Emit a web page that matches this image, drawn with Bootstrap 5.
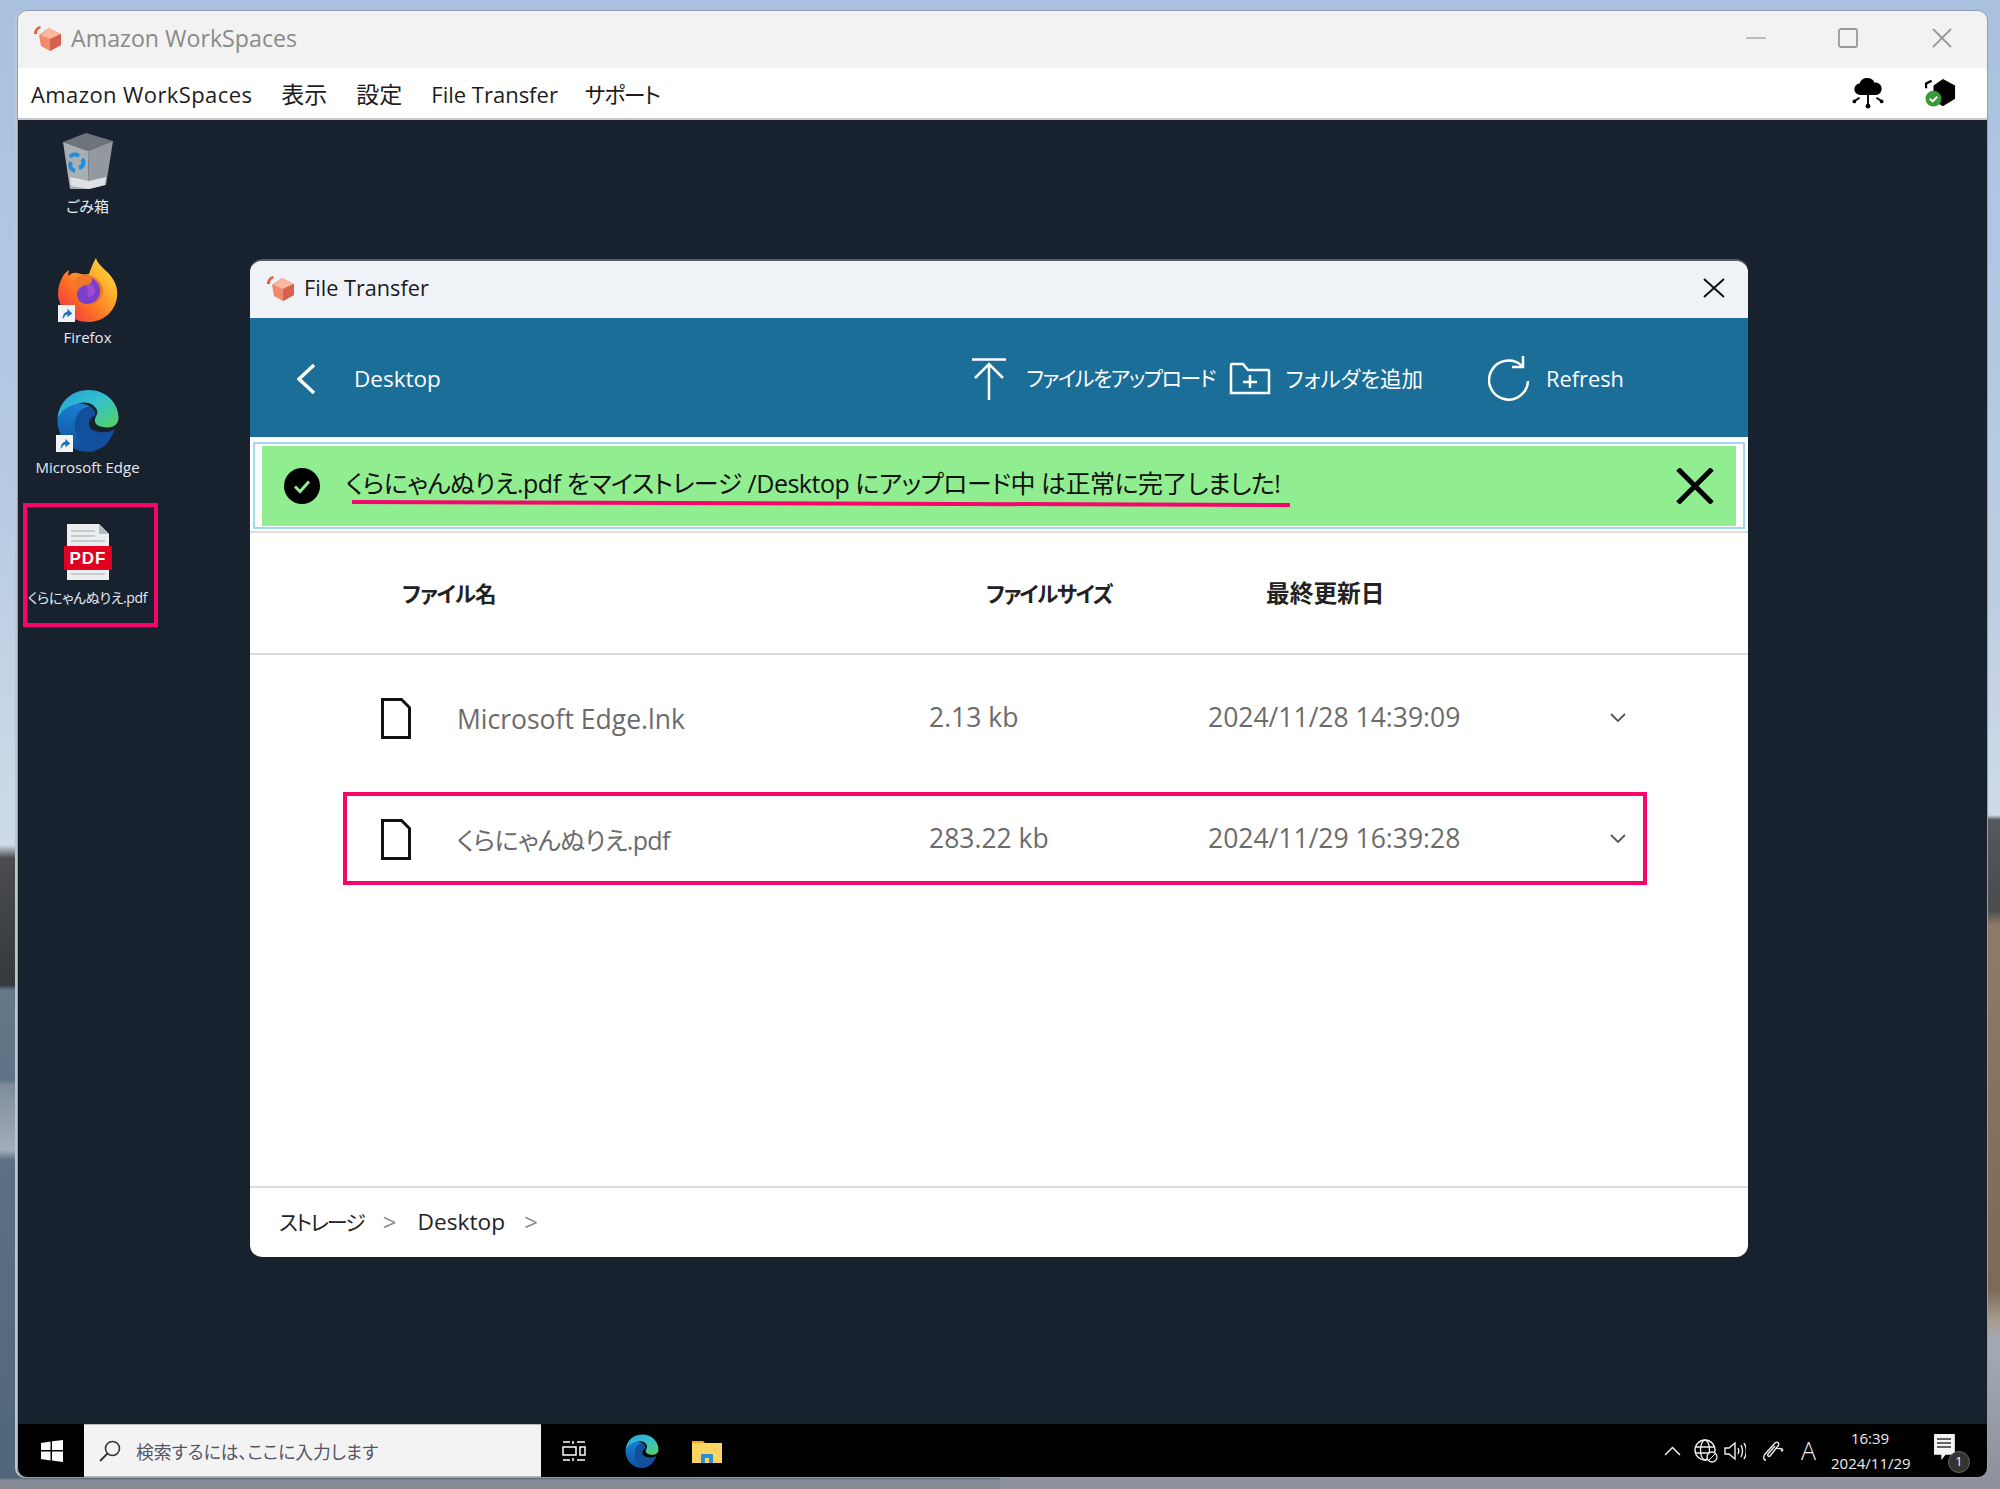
<!DOCTYPE html>
<html lang="ja">
<head>
<meta charset="utf-8">
<title>Amazon WorkSpaces</title>
<link href="https://cdn.jsdelivr.net/npm/bootstrap@5.3.0/dist/css/bootstrap.min.css" rel="stylesheet">
<style>
html,body{height:1489px;overflow:hidden}
body{margin:0;padding:10px 12px 11px 17px;font-family:"Open Sans","Noto Sans CJK JP",sans-serif;font-feature-settings:"palt";color:#1c1c1c;
background:
 linear-gradient(to bottom,#a9c1df 0,#b7cbe3 500px,#cfdbe8 845px,#4a4c50 858px,#35383c 985px,#66798a 990px,#5e7386 1080px,#7f8c9c 1085px,#a3aebb 1150px,#5c7084 1160px,#50667a 1478px,#858a95 1480px,#858a95 1489px) left top/50% 100% no-repeat,
 linear-gradient(to bottom,#a9c1df 0,#bccee3 600px,#cfdbe8 815px,#55585c 820px,#4a4c4e 910px,#8d7a68 925px,#7c6a58 1290px,#a79c90 1320px,#a4aab6 1340px,#8d929c 1478px,#8d929c 1489px) right top/50% 100% no-repeat}
.wsp-win{width:1971px;height:1468px;border:1px solid #8fa0b6;border-radius:10px;overflow:hidden;box-shadow:-2px 0 0 #c0c6ce}
.wsp-title{height:57px;background:#f2f2f2;color:#8a8a8a;font-size:23.2px;padding:0 0 2px 15px}
.ctl-gap1{margin-left:72px}.ctl-gap2{margin-left:74px;margin-right:35px}
.wsp-menu{height:52px;background:#fff;border-bottom:2px solid #c8c8c8;font-size:22px;padding:3px 30px 0 13px}
.wsp-menu .mitem{margin-right:29px}
.wsp-menu .mi-ft{margin-right:27px}
.mi-app{letter-spacing:.4px}.mi-cj{font-size:23px}.mi-sup{font-size:22px;letter-spacing:-1.5px}
.tray-ics{gap:41px;margin-top:-3px}
.wsp-desk{height:1305px;background:#18222f;position:relative}
.desk-col{width:135px;margin-left:5px;padding-top:13px}
.desk-shift{margin-right:6px}
.desk-label{color:#e4e9ef;font-size:15px;line-height:20px;white-space:nowrap}
.mt-bin{margin-top:7px}.mt-ic{margin-top:42px}.mt-lb{margin-top:5px}
.pdf-box{width:135px;height:124px;margin-top:26px;border:4px solid #f7056d;padding:17px 6px 0 0}
.pdf-box .desk-label{margin-top:8px;font-size:14px;letter-spacing:-.35px}
.dlg{position:absolute;left:232px;top:141px;width:1498px;height:996px;background:#fff;border-radius:12px;overflow:hidden;box-shadow:0 -2px 0 #555b63}
.dlg-title{height:57px;background:#eff3f8;font-size:21.7px;padding:0 23px 2px 16px}
.dlg-head{height:119px;background:#1a6e97;color:#fff;font-size:22.5px;padding:3px 124px 0 47px}
.desk-head-name{margin-left:38px}
.t-up{font-size:21px;letter-spacing:-1.55px}.t-fold{font-size:21.5px}.t-ref{font-size:21.8px}
.g1{margin-left:20px}.g2{margin-left:14px}.g3{margin-left:15px}.g4{margin-left:65px}.g5{margin-left:16px}
.alert-wrap{height:96px;position:relative;padding:5px 3px 0;border-bottom:2px solid #dcdcdc;background:#fff}
.ok-alert{height:87px;border:2px solid #a4d6f6;border-radius:0;margin:0;padding:2px 7px 1px 7px;background:#fff}
.ok-in{height:100%;background:#90ee90;color:#111;font-size:25px;letter-spacing:-.5px;padding:0 22px}
.ok-text{margin-left:26px;padding-bottom:4px}
.red-line{position:absolute;left:102px;top:63px}
.tbl-head{height:122px;padding:2px 0 0 152px;border-bottom:2px solid #dcdcdc;font-size:23.7px;font-weight:600;color:#222}
.c-hname{width:584px;font-size:21.5px;letter-spacing:-.9px}.c-hsize{width:280px;font-size:21.5px;letter-spacing:-1.5px}
.frow{height:93px;margin:0 101px 28px 93px;border:4px solid transparent;color:#6b6b6b;font-size:26.5px;padding-left:34px}
.frow-first{margin-top:16px}
.frow-on{border-color:#f7056d}
.f-doc{margin-top:3px}
.f-chev{margin-top:2px}
.c-name{width:472px;margin-left:46px;padding-top:4px}.c-size{width:279px}.c-date{width:402px}
.n-jp{font-size:25px;letter-spacing:-.65px}
.dlg-foot{position:absolute;left:0;right:0;bottom:0;height:71px;border-top:2px solid #dcdcdc;padding-left:29px;font-size:22.7px;color:#222}
.b-jp{font-size:21px;letter-spacing:-1.9px}
.gt{color:#8a8a8a;font-size:24px;margin:0 21px 0 19px}
.wsp-bar{height:53px;background:#000;color:#fff}
.bar-start{width:66px;padding-left:23px}
.bar-search{width:457px;height:53px;background:#f3f3f3;color:#556;font-size:17.8px;padding-left:15px;border-top:1px solid #bbb;border-bottom:1px solid #bbb}
.bar-search svg{margin-right:15px}
.bar-search span{padding-top:3px}
.tv{margin-left:21px}.eg{margin-left:39px}.fd{margin-left:33px}
.tray{margin-left:auto;margin-right:22px;color:#eee}
.tr1{margin-left:13px}.tr2{margin-left:6px}.tr3{margin-left:16px}.tr4{margin-left:17px;font-size:25px;font-weight:300;line-height:1}
.clock{font-size:15px;line-height:25px;text-align:center;width:78px;margin:0 24px 0 15px}
.notif{position:relative;width:32px;height:36px}
.nbadge{position:absolute;right:-5px;bottom:-4px;width:22px;height:22px;border-radius:50%;background:#333;border:1px solid #666;font-size:12px;line-height:20px;text-align:center;color:#fff}
</style>
</head>
<body>
<svg width="0" height="0" class="position-absolute">
 <defs>
  <symbol id="cube" viewBox="0 0 30 26">
   <path d="M16 3l12 6v11l-11 6-9-5-2-11z" fill="#f08a6c"/>
   <path d="M16 3l12 6-11 5-9-4z" fill="#f9b8a0"/>
   <path d="M17 14l11-5v11l-11 6z" fill="#d9604a"/>
   <path d="M1 9C1 5 3 2 7 1l1 2C5 4 4 6 4 9z" fill="#e5603f"/>
  </symbol>
  <symbol id="short" viewBox="0 0 18 18">
   <rect width="18" height="18" fill="#f1f3f5"/>
   <path d="M5 15c0-5 2-7 5-8V4l5 5-5 4v-3c-2 0-3 2-5 5z" fill="#1e6fc0"/>
  </symbol>
  <linearGradient id="eg1" x1="0" y1="0" x2="1" y2="1"><stop offset="0" stop-color="#1f9fe0"/><stop offset=".5" stop-color="#35c1c9"/><stop offset="1" stop-color="#57d35c"/></linearGradient>
  <linearGradient id="eg2" x1="0" y1="0" x2="0" y2="1"><stop offset="0" stop-color="#1a7ed0"/><stop offset="1" stop-color="#0f4f9a"/></linearGradient>
  <symbol id="edge" viewBox="0 0 64 64">
   <path d="M1 30C3 12 16 1 33 1c17 0 30 13 30 28 0 6-4 10-11 10-9 0-13-3-13-7 0-5 4-6 2-11-3-6-11-9-19-6C13 18 5 23 1 30z" fill="url(#eg1)"/>
   <path d="M1 30C6 20 15 15 24 15c7 0 10 3 10 3-9 1-15 8-15 19 0 12 9 23 21 26-3 1-6 1-8 1C14 64 0 49 1 30z" fill="url(#eg2)"/>
   <path d="M19 37c0-11 6-18 15-19 4 2 6 5 5 9-2 1-6 3-6 8 0 6 6 9 14 9 6 0 10-1 12-3-4 13-13 22-24 22C26 60 19 49 19 37z" fill="#124f9c"/>
  </symbol>
 </defs>
</svg>
<div class="wsp-win d-flex flex-column">
 <div class="wsp-title d-flex align-items-center">
  <svg width="30" height="26" class="me-2"><use href="#cube"/></svg>
  <span>Amazon WorkSpaces</span>
  <div class="ms-auto d-flex align-items-center">
   <svg width="20" height="20" viewBox="0 0 20 20"><path d="M0 10h20" stroke="#aaa" stroke-width="1.6"/></svg>
   <svg width="20" height="20" viewBox="0 0 20 20" class="ctl-gap1"><rect x="1" y="1" width="18" height="18" rx="2" fill="none" stroke="#999" stroke-width="1.8"/></svg>
   <svg width="20" height="20" viewBox="0 0 20 20" class="ctl-gap2"><path d="M1 1l18 18M19 1L1 19" stroke="#999" stroke-width="1.8"/></svg>
  </div>
 </div>
 <div class="wsp-menu d-flex align-items-center">
  <span class="mitem mi-app">Amazon WorkSpaces</span><span class="mitem mi-cj">表示</span><span class="mitem mi-cj">設定</span><span class="mitem mi-ft">File Transfer</span><span class="mi-sup">サポート</span>
  <div class="ms-auto d-flex align-items-center tray-ics">
   <svg width="32" height="32" viewBox="0 0 34 34"><path d="M9 19a6 6 0 0 1-1-12c1-4 4-6 8-6 4 0 7 2 8 5a6.500 6.500 0 0 1 2 13z"/><path d="M17 19v12M8 22l-6 4M26 22l6 4" stroke="#000" stroke-width="2"/><circle cx="17" cy="31" r="2.500"/><circle cx="2.500" cy="26" r="2"/><circle cx="31.500" cy="26" r="2"/></svg>
   <svg width="32" height="30" viewBox="0 0 34 32"><path d="M19 1l13 7v14l-13 8-10-6V8z"/><path d="M1 11V6l6-3" stroke="#000" stroke-width="2.500" fill="none"/><circle cx="9" cy="22" r="8.500" fill="#3a9a35"/><path d="M5 22l3 3 5-5" stroke="#fff" stroke-width="2" fill="none"/></svg>
  </div>
 </div>
 <div class="wsp-desk">
  <div class="desk-col d-flex flex-column align-items-center">
   <svg width="52" height="56" viewBox="0 0 52 56" class="desk-shift"><path d="M1 9L24 0l27 8-25 10z" fill="#6f747a"/><path d="M1 9l25 9 1 38H8z" fill="#a9aeb3"/><path d="M26 18l25-10-7 44-17 4z" fill="#93999f"/><path d="M8 44l19 4 17-4-1 8-16 4-18-3z" fill="#dfe2e5"/><path d="M8 24a6 6 0 0 1 9-1M20 26c3 3 1 8-3 9M13 38c-4-1-6-5-4-9" stroke="#1e8fe0" stroke-width="4" fill="none"/></svg>
   <div class="desk-label mt-bin desk-shift">ごみ箱</div>
   <div class="mt-ic position-relative desk-shift">
    <svg width="60" height="64" viewBox="0 0 60 64">
     <defs><linearGradient id="ff" x1="0" y1="1" x2="1" y2="0"><stop offset="0" stop-color="#ec1f5f"/><stop offset=".35" stop-color="#fb6a25"/><stop offset=".7" stop-color="#ffb52e"/><stop offset="1" stop-color="#ffe14a"/></linearGradient></defs>
     <path d="M38 0c2 7 8 10 14 17 6 7 8 15 7 22-2 15-14 25-29 25C13 64 0 51 0 35c0-6 2-11 4-15 1-3 3-5 7-8l-1 6c3-3 7-4 9-3 4 1 7 2 12 1 2-6 4-11 7-16z" fill="url(#ff)"/>
     <path d="M30 17c-8-1-14 4-17 9 2 0 3 0 5 1-1 2-1 4-1 6 0 9 8 15 15 14 8-1 13-7 13-14 0-8-6-14-15-16z" fill="#f0772a"/>
     <path d="M19 36c0-5 5-9 11-9 3-1 4-3 4-7 5 3 8 7 8 13 0 8-6 13-13 13-6 0-10-4-10-10z" fill="#7a3fc9"/>
     <path d="M29 27c5-1 8 2 8 6 0 3-3 6-7 6" fill="#a44ad1"/>
    </svg>
    <svg width="17" height="17" class="position-absolute bottom-0 start-0"><use href="#short"/></svg>
   </div>
   <div class="desk-label mt-lb desk-shift">Firefox</div>
   <div class="mt-ic position-relative desk-shift">
    <svg width="64" height="63"><use href="#edge"/></svg>
    <svg width="17" height="17" class="position-absolute bottom-0 start-0"><use href="#short"/></svg>
   </div>
   <div class="desk-label mt-lb desk-shift">Microsoft Edge</div>
   <div class="pdf-box d-flex flex-column align-items-center">
    <svg width="48" height="56" viewBox="0 0 48 56"><path d="M3 0h32l10 10v46H3z" fill="#eceeef"/><path d="M35 0l10 10H35z" fill="#b9bcc0"/><path d="M7 7h24M7 12h24M7 17h34M7 50h34" stroke="#bcc0c4" stroke-width="1.500"/><rect y="22" width="48" height="24" fill="#e00020"/><text x="24" y="40" text-anchor="middle" font-family="'Liberation Sans',sans-serif" font-weight="700" font-size="17" fill="#fff" letter-spacing="1">PDF</text></svg>
    <div class="desk-label">くらにゃんぬりえ.pdf</div>
   </div>
  </div>

  <div class="dlg">
   <div class="dlg-title d-flex align-items-center">
    <svg width="30" height="26" class="me-2"><use href="#cube"/></svg>
    <span>File Transfer</span>
    <svg width="22" height="20" viewBox="0 0 22 20" class="ms-auto"><path d="M1 1l20 18M21 1L1 19" stroke="#111" stroke-width="2"/></svg>
   </div>
   <div class="dlg-head d-flex align-items-center">
    <svg width="19" height="30" viewBox="0 0 19 30"><path d="M17 1L2 15l15 14" fill="none" stroke="#fff" stroke-width="3.500"/></svg>
    <span class="desk-head-name">Desktop</span>
    <div class="ms-auto d-flex align-items-center">
     <svg width="34" height="42" viewBox="0 0 34 42"><path d="M0 1.500h34M17 6v36M3 20L17 6l14 14" fill="none" stroke="#fff" stroke-width="2.500"/></svg>
     <span class="g1 t-up">ファイルをアップロード</span>
     <svg width="42" height="33" viewBox="0 0 42 33" class="g2"><path d="M2 31V3a1 1 0 0 1 1-1h11l5 6h20a1 1 0 0 1 1 1v22z" fill="none" stroke="#fff" stroke-width="2.500"/><path d="M21 13v13M14 20h14" stroke="#fff" stroke-width="2.500"/></svg>
     <span class="g3 t-fold">フォルダを追加</span>
     <svg width="42" height="46" viewBox="0 0 42 46" class="g4"><path d="M34 10a19.500 19.500 0 1 0 6 15" fill="none" stroke="#fff" stroke-width="2.500"/><path d="M35 0v11H24" fill="none" stroke="#fff" stroke-width="2.500"/></svg>
     <span class="g5 t-ref">Refresh</span>
    </div>
   </div>
   <div class="alert-wrap">
    <div class="alert ok-alert" role="alert">
     <div class="ok-in d-flex align-items-center">
      <svg width="36" height="36" viewBox="0 0 36 36" class="flex-shrink-0"><circle cx="18" cy="18" r="18"/><path d="M11 18.500l5 5 9-10" fill="none" stroke="#90ee90" stroke-width="3"/></svg>
      <span class="ok-text">くらにゃんぬりえ.pdf をマイストレージ /Desktop にアップロード中 は正常に完了しました!</span>
      <svg width="38" height="36" viewBox="0 0 38 36" class="ms-auto"><path d="M2 1l34 34M36 1L2 35" stroke="#000" stroke-width="5"/></svg>
     </div>
    </div>
    <svg class="red-line" width="938" height="7" viewBox="0 0 938 7"><path d="M0 2L938 5" stroke="#f7056d" stroke-width="4"/></svg>
   </div>
   <div class="tbl-head d-flex align-items-center">
    <span class="c-hname">ファイル名</span><span class="c-hsize">ファイルサイズ</span><span>最終更新日</span>
   </div>
   <div class="frow frow-first d-flex align-items-center">
    <svg width="30" height="41" viewBox="0 0 30 41" class="flex-shrink-0 f-doc"><path d="M1.500 1.500h19l8 8v30h-27z" fill="#fff" stroke="#111" stroke-width="3"/></svg>
    <span class="c-name">Microsoft Edge.lnk</span><span class="c-size">2.13 kb</span><span class="c-date">2024/11/28 14:39:09</span>
    <svg width="16" height="10" viewBox="0 0 16 10" class="f-chev"><path d="M1 1l7 7 7-7" fill="none" stroke="#555" stroke-width="1.800"/></svg>
   </div>
   <div class="frow frow-on d-flex align-items-center">
    <svg width="30" height="41" viewBox="0 0 30 41" class="flex-shrink-0 f-doc"><path d="M1.500 1.500h19l8 8v30h-27z" fill="#fff" stroke="#111" stroke-width="3"/></svg>
    <span class="c-name n-jp">くらにゃんぬりえ.pdf</span><span class="c-size">283.22 kb</span><span class="c-date">2024/11/29 16:39:28</span>
    <svg width="16" height="10" viewBox="0 0 16 10" class="f-chev"><path d="M1 1l7 7 7-7" fill="none" stroke="#555" stroke-width="1.800"/></svg>
   </div>
   <div class="dlg-foot d-flex align-items-center">
    <span class="b-jp">ストレージ</span><span class="gt">&gt;</span><span>Desktop</span><span class="gt">&gt;</span>
   </div>
  </div>
 </div>
 <div class="wsp-bar d-flex align-items-center">
  <div class="bar-start"><svg width="22" height="22" viewBox="0 0 22 22" class="d-block"><path d="M0 3l9.500-1.500V10H0zM11 1.200L22 0v10H11zM0 11.500h9.500v9L0 19zM11 11.500h11V22l-11-1.500z" fill="#fff"/></svg></div>
  <div class="bar-search d-flex align-items-center">
   <svg width="22" height="22" viewBox="0 0 22 22"><circle cx="13.500" cy="8.500" r="7" fill="none" stroke="#333" stroke-width="1.600"/><path d="M8.500 13.500L1 21" stroke="#333" stroke-width="1.800"/></svg>
   <span>検索するには、ここに入力します</span>
  </div>
  <svg width="24" height="20" viewBox="0 0 24 20" class="tv"><path d="M1 1h7M15 1h8M1 19h7M15 19h8M1 6h13v8H1zM18 6h5v8h-5zM11 0v3M11 17v3" fill="none" stroke="#fff" stroke-width="1.500"/></svg>
  <svg width="34" height="34" class="eg"><use href="#edge"/></svg>
  <svg width="30" height="24" viewBox="0 0 30 24" class="fd"><path d="M0 2h11l3 3H0z" fill="#f5a623"/><rect y="4" width="30" height="20" fill="#fcd462"/><path d="M9 24v-8a1 1 0 0 1 1-1h10a1 1 0 0 1 1 1v8h-4v-5h-4v5z" fill="#2a8fd8"/></svg>
  <div class="tray d-flex align-items-center">
   <svg width="17" height="10" viewBox="0 0 17 10"><path d="M1 9l7.500-7.500L16 9" fill="none" stroke="#eee" stroke-width="1.500"/></svg>
   <svg width="24" height="24" viewBox="0 0 24 24" class="tr1"><circle cx="11" cy="11" r="10" fill="none" stroke="#eee" stroke-width="1.400"/><ellipse cx="11" cy="11" rx="4.500" ry="10" fill="none" stroke="#eee" stroke-width="1.300"/><path d="M1 8h20M1 14h20" stroke="#eee" stroke-width="1.300"/><circle cx="18" cy="18" r="5" fill="#000" stroke="#eee" stroke-width="1.300"/><path d="M15 21l6-6" stroke="#eee"/></svg>
   <svg width="22" height="22" viewBox="0 0 22 22" class="tr2"><path d="M1 8h4l6-5v16l-6-5H1z" fill="none" stroke="#eee" stroke-width="1.400"/><path d="M14 8c1 2 1 4 0 6M17 5c2 4 2 8 0 12M20 3c3 5 3 11 0 16" fill="none" stroke="#eee" stroke-width="1.400"/></svg>
   <svg width="22" height="22" viewBox="0 0 22 22" class="tr3"><path d="M4 20c-3 0-3-4 0-7l9-10c2-2 5 0 3 3l-8 10c-1 1-3 0-2-2l7-8M14 8l6 1c1 0 1 2-1 2" fill="none" stroke="#eee" stroke-width="1.400"/></svg>
   <span class="tr4">A</span>
   <div class="clock"><div>16:39</div><div>2024/11/29</div></div>
   <div class="notif"><svg width="32" height="32" viewBox="0 0 32 32"><path d="M1 1h20v20h-9l-4 5v-5H1z" fill="#f5f5f5" transform="scale(1.040)"/><path d="M4 6h14M4 10h14M4 14h14" stroke="#333" stroke-width="1.500"/></svg><span class="nbadge">1</span></div>
  </div>
 </div>
</div>
</body>
</html>
